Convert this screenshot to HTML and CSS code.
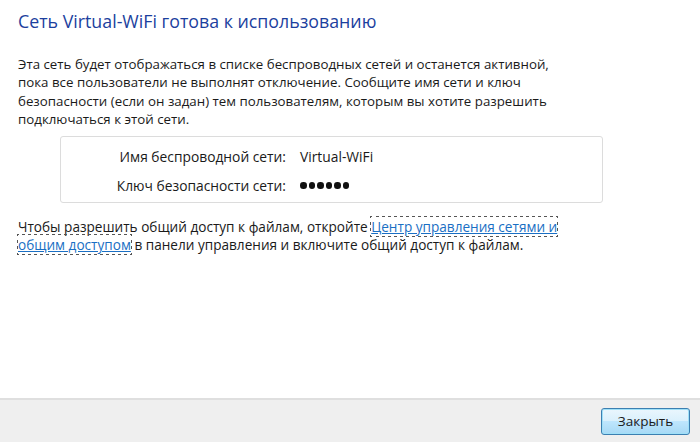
FILE: index.html
```html
<!DOCTYPE html>
<html lang="ru">
<head>
    <meta charset="UTF-8">
    <title>Virtual-WiFi</title>
    <link rel="stylesheet" href="styles.css">
</head>
<body>
    <div class="dialog">
        <div class="content">
            <h1 class="title">Сеть Virtual-WiFi готова к использованию</h1>
            <p class="text">Эта сеть будет отображаться в списке беспроводных сетей и останется активной,<br>пока все пользователи не выполнят отключение. Сообщите имя сети и ключ<br>безопасности (если он задан) тем пользователям, которым вы хотите разрешить<br>подключаться к этой сети.</p>
            <div class="info-box">
                <div class="info-row">
                    <span class="info-label">Имя беспроводной сети:</span>
                    <span class="info-value">Virtual-WiFi</span>
                </div>
                <div class="info-row">
                    <span class="info-label">Ключ безопасности сети:</span>
                    <span class="info-value dots">
                        <i class="dot"></i><i class="dot"></i><i class="dot"></i><i class="dot"></i><i class="dot"></i><i class="dot"></i>
                    </span>
                </div>
            </div>
            <p class="text share">Чтобы разрешить общий доступ к файлам, откройте <a href="#" class="link">Центр управления сетями и<br>общим доступом</a> в панели управления и включите общий доступ к файлам.</p>
        </div>
        <div class="footer">
            <button class="btn">Закрыть</button>
        </div>
    </div>
</body>
</html>
```

FILE: styles.css
```css
body, html {
    margin: 0;
    padding: 0;
    height: 100%;
    background-color: #ffffff;
    overflow: hidden;
}
.dialog {
    display: flex;
    flex-direction: column;
    height: 100%;
    font-family: "Open Sans", "Noto Sans", sans-serif;
    color: #1a1a1a;
}
.content {
    flex: 1;
    padding: 9px 18px 0 18px;
}
.title {
    margin: 0;
    font-size: 17.8px;
    font-weight: normal;
    color: #1c3f9e;
    line-height: 24px;
}
.text {
    margin: 0;
    font-size: 13.3px;
    line-height: 18.4px;
    white-space: nowrap;
}
.title + .text {
    margin-top: 22px;
}
.info-box {
    box-sizing: border-box;
    margin: 7px 0 0 42px;
    width: 543px;
    height: 67px;
    padding-top: 4px;
    border: 1px solid #dcdcdc;
    border-radius: 3px;
    display: flex;
    flex-direction: column;
    justify-content: center;
    gap: 11px;
}
.info-row {
    display: grid;
    grid-template-columns: 225px 1fr;
    column-gap: 14px;
    font-size: 13.8px;
    line-height: 18px;
    align-items: center;
}
.info-label {
    text-align: right;
}
.dots {
    display: flex;
    gap: 2px;
    align-items: center;
}
.dot {
    width: 6.5px;
    height: 6.5px;
    border-radius: 50%;
    background-color: #111111;
}
.share {
    margin-top: 15px;
    font-size: 13.6px;
}
.link {
    color: #1a6fc4;
    text-decoration: underline;
    outline: 1px dotted #555555;
}
.footer {
    height: 42px;
    background-color: #efefef;
    border-top: 2px solid #dfdfdf;
    display: flex;
    justify-content: flex-end;
    align-items: center;
    padding-right: 10px;
}
.btn {
    width: 89px;
    height: 27px;
    font-family: "Open Sans", "Noto Sans", sans-serif;
    font-size: 13.5px;
    color: #1a1a1a;
    border: 1px solid #3c7fb1;
    border-radius: 3px;
    background: linear-gradient(#eaf6fd, #d9f0fc 50%, #bee6fd 50%, #a7d9f5);
    box-shadow: inset 0 0 0 1px #9fe0f8;
}
```
